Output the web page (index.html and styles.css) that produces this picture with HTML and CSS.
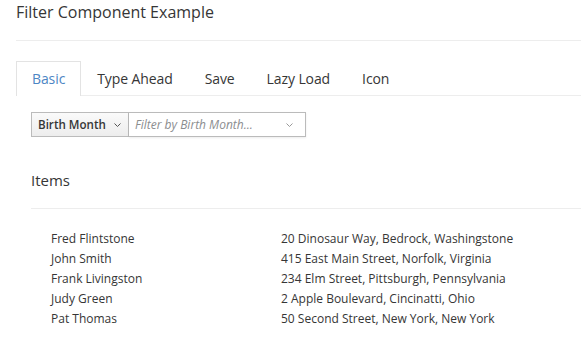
FILE: index.html
```html
<!DOCTYPE html>
<html>
<head>
<meta charset="utf-8">
<link rel="stylesheet" href="styles.css">
</head>
<body>
<div class="page">
  <h1 class="title">Filter Component Example</h1>
  <ul class="tabs">
    <li class="tab active">Basic</li>
    <li class="tab">Type Ahead</li>
    <li class="tab">Save</li>
    <li class="tab">Lazy Load</li>
    <li class="tab">Icon</li>
  </ul>
  <div class="content">
    <div class="filter">
      <div class="field-btn">Birth Month <svg class="caret" width="7" height="4" viewBox="0 0 7 4"><path d="M0.5 0.5 L3.5 3.5 L6.5 0.5" fill="none" stroke="#555" stroke-width="1"/></svg></div>
      <div class="value-input"><span class="placeholder">Filter by Birth Month...</span><svg class="caret" width="7" height="4" viewBox="0 0 7 4"><path d="M0.5 0.5 L3.5 3.5 L6.5 0.5" fill="none" stroke="#999" stroke-width="1"/></svg></div>
    </div>
    <h2 class="items-title">Items</h2>
    <div class="list">
      <div class="row"><span class="name">Fred Flintstone</span><span class="addr">20 Dinosaur Way, Bedrock, Washingstone</span></div>
      <div class="row"><span class="name">John Smith</span><span class="addr">415 East Main Street, Norfolk, Virginia</span></div>
      <div class="row"><span class="name">Frank Livingston</span><span class="addr">234 Elm Street, Pittsburgh, Pennsylvania</span></div>
      <div class="row"><span class="name">Judy Green</span><span class="addr">2 Apple Boulevard, Cincinatti, Ohio</span></div>
      <div class="row"><span class="name">Pat Thomas</span><span class="addr">50 Second Street, New York, New York</span></div>
    </div>
  </div>
</div>
</body>
</html>
```
FILE: styles.css
```css
html, body { margin: 0; padding: 0; background: #fff; }
body { font-family: "Open Sans", "Noto Sans", sans-serif; font-size: 12px; color: #363636; }
.page { padding-left: 16px; }
.title { margin: 0; font-size: 16px; font-weight: 400; line-height: 24px; padding-bottom: 16px; border-bottom: 1px solid #ededed; color: #363636; }
.tabs { list-style: none; margin: 20px 0 0 0; padding: 0; display: flex; border-bottom: 1px solid #ededed; }
.tab { font-size: 14px; line-height: 20px; padding: 7px 15px 6px 15px; border: 1px solid transparent; border-bottom: none; color: #363636; margin-bottom: -1px; letter-spacing: -0.1px; }
.tab.active { border-color: #e3e3e3; background: #fff; color: #4d86c4; padding-bottom: 7px; }
.content { padding-left: 15px; }
.filter { display: flex; margin-top: 16px; height: 25px; }
.field-btn { display: flex; align-items: center; gap: 8px; white-space: nowrap; box-sizing: border-box; width: 98px; padding: 0 6px; font-weight: 600; font-size: 11.6px; color: #363636; background: linear-gradient(#fafafa, #ededed); border: 1px solid #bbb; }
.value-input { display: flex; align-items: center; justify-content: space-between; white-space: nowrap; box-sizing: border-box; width: 177px; padding: 0 12px 0 6px; border: 1px solid #bbb; border-left: none; box-shadow: 0 1px 2px rgba(0,0,0,0.08); }
.placeholder { font-style: italic; color: #8b8d8f; font-size: 12px; }
.caret { display: block; }
.items-title { margin: 33px 0 0 0; font-size: 15px; font-weight: 400; line-height: 20px; padding-bottom: 18px; border-bottom: 1px solid #ededed; }
.list { padding: 20px 0 0 20px; }
.row { display: flex; line-height: 20px; }
.name { width: 230px; }
```
